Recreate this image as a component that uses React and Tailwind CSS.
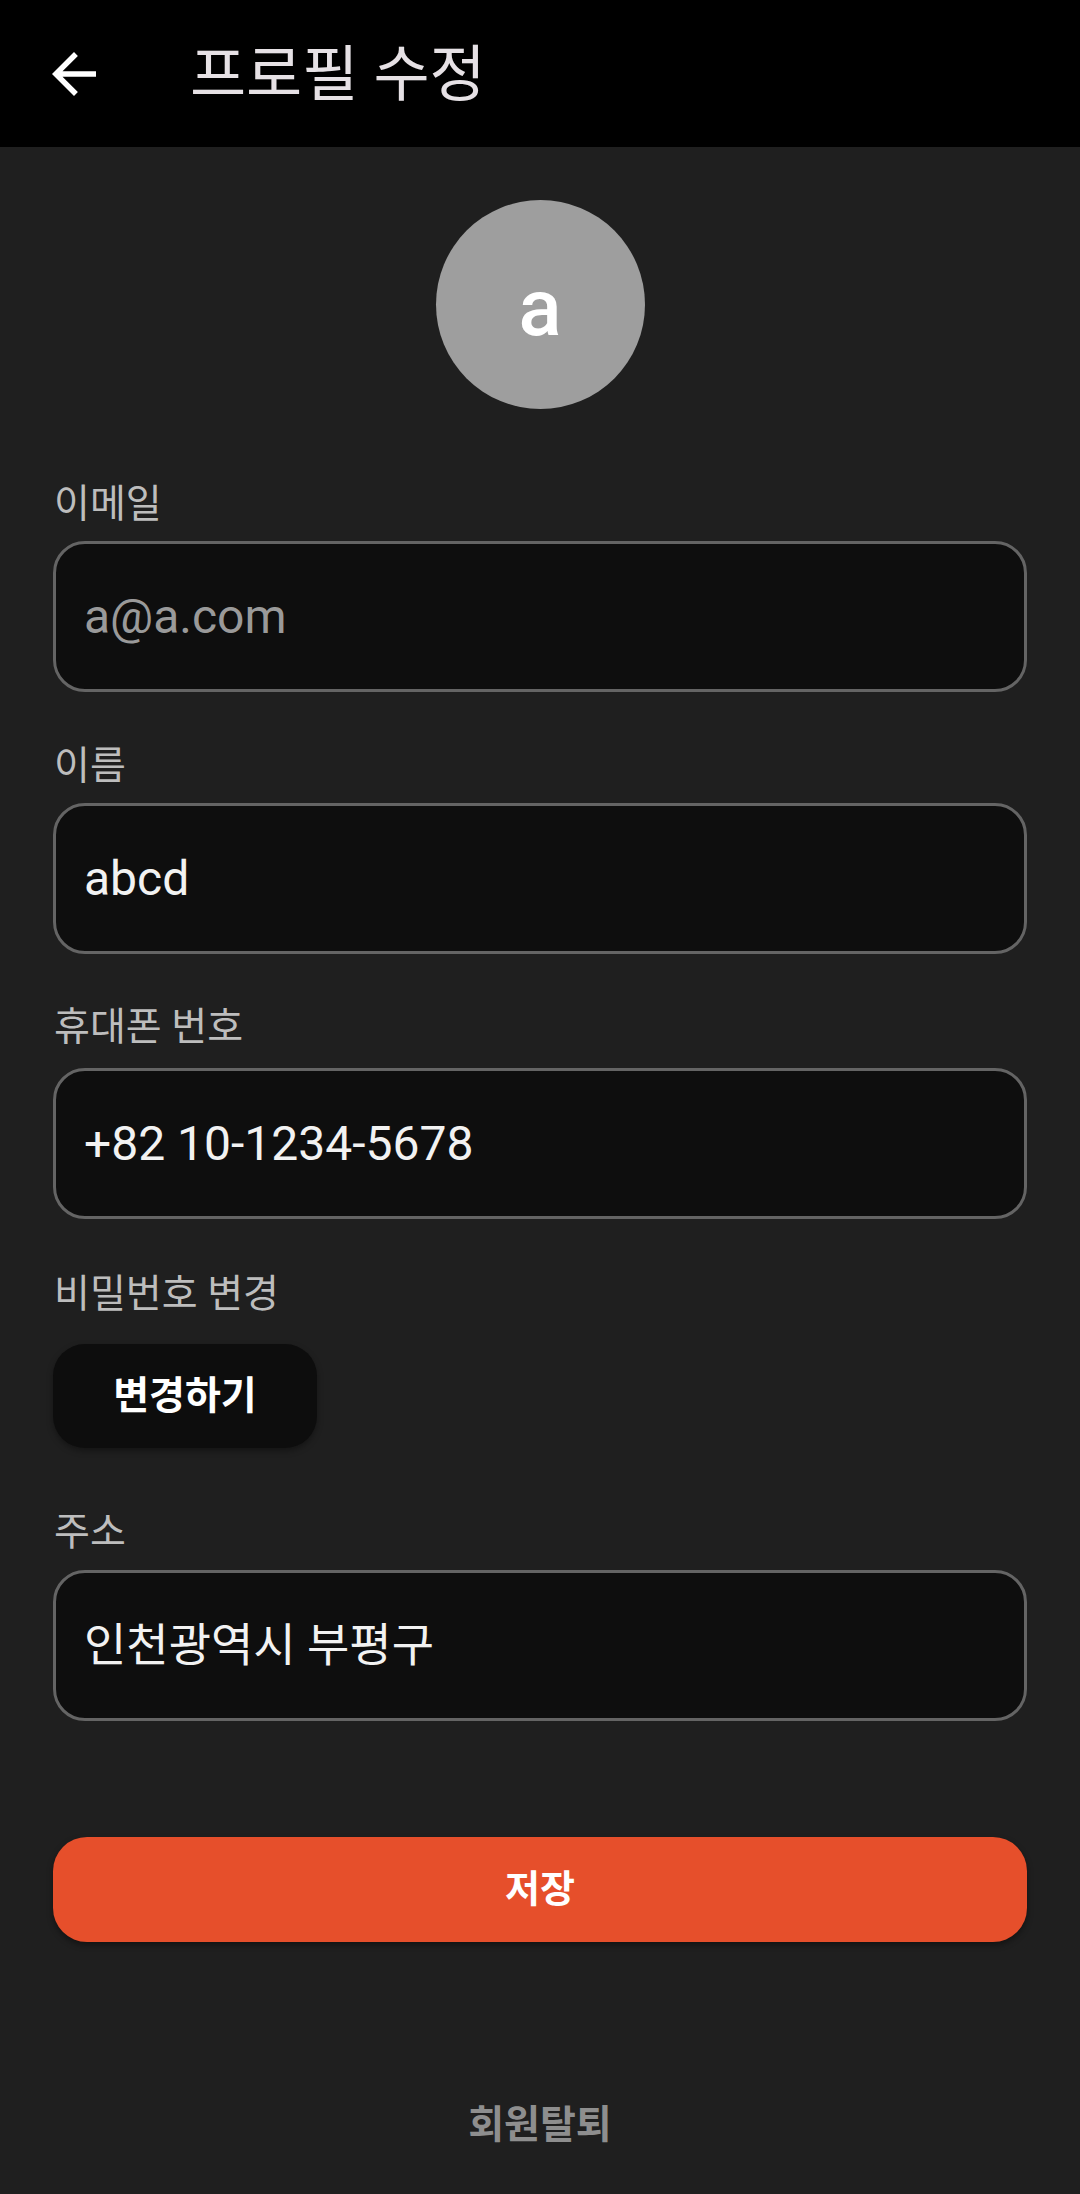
import React from 'react'

const FONT = 'font-[Roboto,"Noto_Sans_CJK_KR",sans-serif]'

function ArrowBack() {
  return (
    <svg viewBox="0 0 24 24" className="w-[66px] h-[66px]" fill="#ffffff">
      <path d="M20 11H7.83l5.59-5.59L12 4l-8 8 8 8 1.41-1.41L7.83 13H20v-2z" />
    </svg>
  )
}

function Label({ children, className = '' }) {
  return (
    <div className={`text-[39px] leading-[48px] text-[#bdbdbd] pl-[1px] ${className}`}>
      {children}
    </div>
  )
}

function Field({ value, muted, textClass = 'text-[48px]', className = '' }) {
  return (
    <div
      className={`h-[151px] rounded-[32px] border-[3px] border-[#646464] bg-[#0e0e0e] flex items-center pl-[28px] ${className}`}
    >
      <span className={`${textClass} ${muted ? 'text-[#9a9a9a]' : 'text-[#f2f2f2]'}`}>{value}</span>
    </div>
  )
}

export default function App() {
  return (
    <div className={`${FONT} min-h-[2194px] bg-[#1f1f1f] flex flex-col`}>
      {/* Header */}
      <header className="h-[147px] bg-black flex items-center shrink-0">
        <button className="ml-[41px] mt-[1px]">
          <ArrowBack />
        </button>
        <h1 className="ml-[83px] text-[61px] text-[#e6e1e5] leading-none mt-[3px]">프로필 수정</h1>
      </header>

      <main className="px-[53px] flex flex-col">
        {/* Avatar */}
        <div className="mt-[53px] self-center w-[209px] h-[209px] rounded-full bg-[#9e9e9e] flex items-center justify-center">
          <span className="text-[80px] font-medium text-white leading-none mt-[6px]">a</span>
        </div>

        <Label className="mt-[71px]">이메일</Label>
        <Field value="a@a.com" muted className="mt-[13px]" />

        <Label className="mt-[50px]">이름</Label>
        <Field value="abcd" className="mt-[13px]" />

        <Label className="mt-[49px]">휴대폰 번호</Label>
        <Field value="+82 10-1234-5678" className="mt-[17px]" />

        <Label className="mt-[51px]">비밀번호 변경</Label>
        <button className="mt-[26px] self-start w-[264px] h-[104px] rounded-[32px] bg-[#0d0d0d] shadow-[0_3px_6px_rgba(0,0,0,0.35)] text-white text-[39px] font-bold">
          변경하기
        </button>

        <Label className="mt-[60px]">주소</Label>
        <Field value="인천광역시 부평구" textClass="text-[46px]" className="mt-[14px]" />

        {/* Save */}
        <button className="mt-[116px] h-[105px] rounded-[34px] bg-[#e64f2b] shadow-[0_3px_6px_rgba(0,0,0,0.4)] text-white text-[38px] font-bold">
          저장
        </button>

        {/* Withdraw */}
        <button className="mt-[159px] self-center text-[39px] leading-[48px] font-bold text-[#8e8e8e]">
          회원탈퇴
        </button>
      </main>
    </div>
  )
}
